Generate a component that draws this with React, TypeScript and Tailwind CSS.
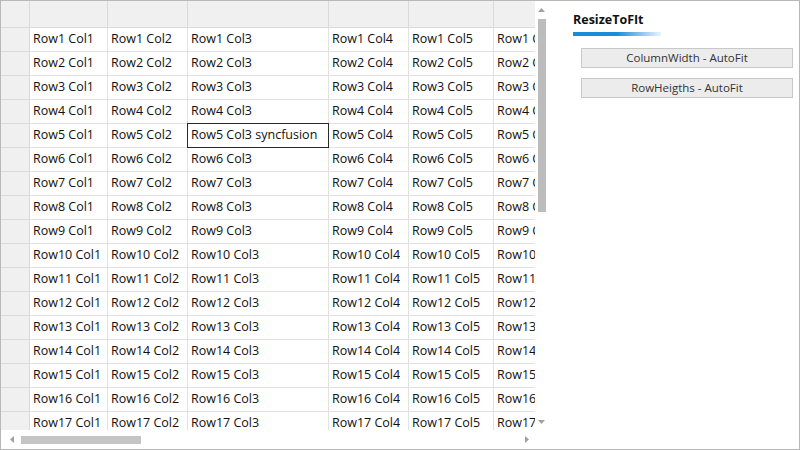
import React from 'react';

const colWidths = [78, 80, 141, 80, 85, 85];
const rowCount = 18;

const Arrow: React.FC<{ dir: 'up' | 'down' | 'left' | 'right' }> = ({ dir }) => {
  const pts = {
    up: '0,4 3.5,0 7,4',
    down: '0,0 3.5,4 7,0',
    left: '4,0 0,3.5 4,7',
    right: '0,0 4,3.5 0,7',
  }[dir];
  const w = dir === 'up' || dir === 'down' ? 7 : 4;
  const h = dir === 'up' || dir === 'down' ? 4 : 7;
  return (
    <svg width={w} height={h} viewBox={`0 0 ${w} ${h}`}>
      <polygon points={pts} fill="#a0a0a0" />
    </svg>
  );
};

const App: React.FC = () => {
  const rows = Array.from({ length: rowCount }, (_, i) => i + 1);

  return (
    <div className="w-[800px] h-[450px] border border-[#b8b8b8] bg-white flex overflow-hidden font-['Open_Sans',sans-serif] text-[#111]">
      {/* grid + scrollbars */}
      <div className="w-[547px] flex flex-col shrink-0">
        <div className="flex flex-1 min-h-0">
          <div className="w-[534px] overflow-hidden">
            {/* header row */}
            <div className="flex h-[27px] bg-[#f0f0f0]">
              <div className="w-[29px] shrink-0 border-r border-b border-[#dadada]" />
              {colWidths.map((w, c) => (
                <div
                  key={c}
                  style={{ width: w }}
                  className="shrink-0 border-r border-b border-[#dadada]"
                />
              ))}
            </div>
            {rows.map((r) => (
              <div key={r} className="flex h-[24px]">
                <div className="w-[29px] shrink-0 bg-[#f0f0f0] border-r border-b border-[#dadada]" />
                {colWidths.map((w, c) => {
                  const selected = r === 5 && c === 2;
                  return (
                    <div
                      key={c}
                      style={{ width: w }}
                      className="relative shrink-0 flex items-center pl-[3px] text-[12.5px] whitespace-nowrap border-r border-b border-[#e2e2e2]"
                    >
                      <span className="overflow-hidden">
                        {`Row${r} Col${c + 1}${selected ? ' syncfusion' : ''}`}
                      </span>
                      {selected && (
                        <div className="absolute -left-px -top-px -right-px -bottom-px border border-[#2a2a2a]" />
                      )}
                    </div>
                  );
                })}
              </div>
            ))}
          </div>
          {/* vertical scrollbar */}
          <div className="w-[13px] flex flex-col items-center">
            <div className="h-[18px] flex items-center justify-center">
              <Arrow dir="up" />
            </div>
            <div className="w-[8px] h-[193px] bg-[#bcbcbc]" />
            <div className="flex-1" />
            <div className="h-[16px] flex items-center justify-center">
              <Arrow dir="down" />
            </div>
          </div>
        </div>
        {/* horizontal scrollbar */}
        <div className="h-[19px] flex items-center pl-[9px] pr-[19px]">
          <Arrow dir="left" />
          <div className="ml-[7px] w-[120px] h-[8px] bg-[#c4c4c4]" />
          <div className="flex-1" />
          <Arrow dir="right" />
        </div>
      </div>

      {/* right panel */}
      <div className="flex-1 pl-[25px] pr-[6px] pt-[10px]">
        <div className="text-[12.5px] font-bold leading-[18px] text-[#111]">ResizeToFIt</div>
        <div className="mt-[3px] w-[88px] h-[4px] bg-gradient-to-r from-[#1a8cd8] via-[#1a8cd8] to-[#1a8cd8]/10" />
        <div className="ml-[8px] mt-[12px] flex flex-col gap-[10px]">
          <button className="h-[20px] w-full border border-[#c8c8c8] bg-[#ececec] text-[11.5px] text-[#333] flex items-center justify-center">
            ColumnWidth - AutoFit
          </button>
          <button className="h-[20px] w-full border border-[#c8c8c8] bg-[#ececec] text-[11.5px] text-[#333] flex items-center justify-center">
            RowHeigths - AutoFit
          </button>
        </div>
      </div>
    </div>
  );
};

export default App;
